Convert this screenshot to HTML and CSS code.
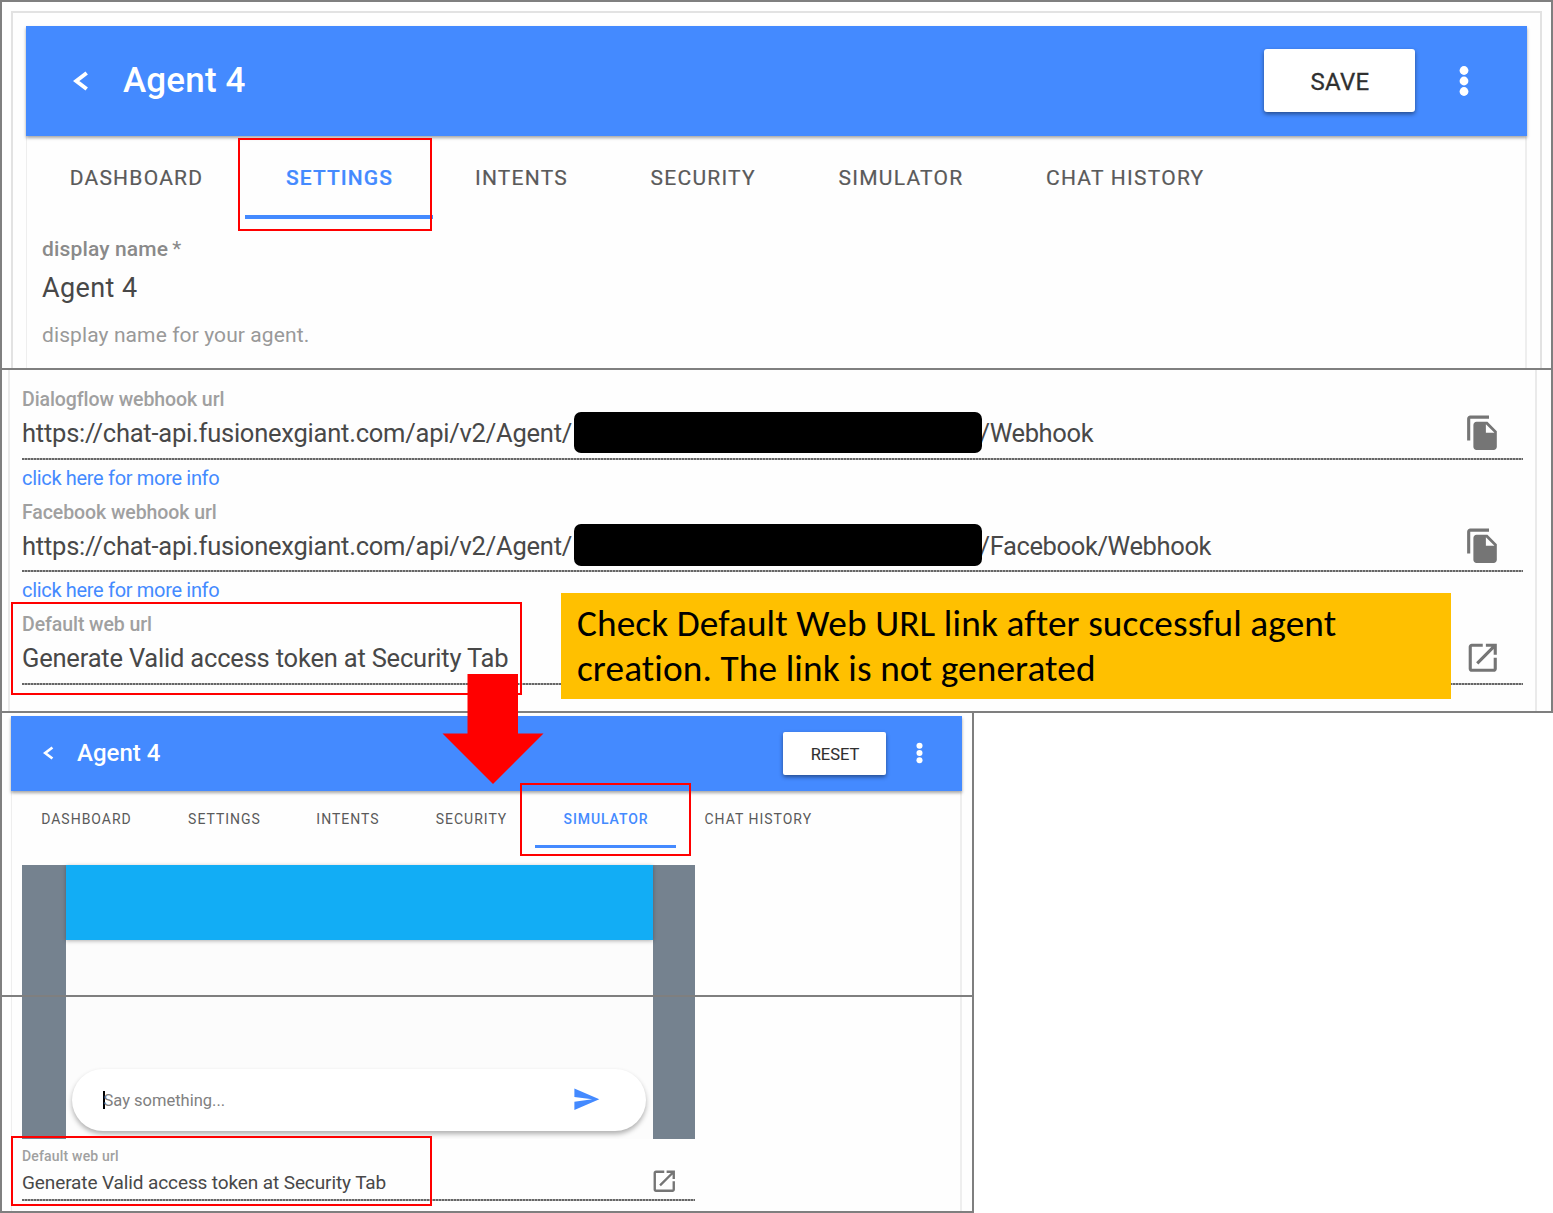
FILE: index.html
```html
<!DOCTYPE html>
<html lang="en">
<head>
<meta charset="utf-8">
<title>Agent 4</title>
<link rel="stylesheet" href="styles.css">
</head>
<body>
<svg class="defs" width="0" height="0" aria-hidden="true">
  <symbol id="back" viewBox="0 0 16 20"><path d="M13.700 2 3.200 10l10.500 8" fill="none" stroke="currentColor" stroke-width="4"/></symbol>
  <symbol id="more" viewBox="0 0 10 32"><circle cx="5" cy="5.500" r="4.400"/><circle cx="5" cy="16" r="4.400"/><circle cx="5" cy="26.500" r="4.400"/></symbol>
  <symbol id="copy" viewBox="0 0 24 24"><path d="M16 1H4c-1.100 0-2 .9-2 2v14h2V3h12V1zm-1 4l6 6v10c0 1.100-.9 2-2 2H7.990C6.890 23 6 22.100 6 21l.01-14c0-1.100.89-2 1.990-2h7zm-1 7h5.500L14 6.500V12z"/></symbol>
  <symbol id="open" viewBox="0 0 24 24"><path d="M19 19H5V5h7V3H5c-1.110 0-2 .9-2 2v14c0 1.100.89 2 2 2h14c1.100 0 2-.9 2-2v-7h-2v7zM14 3v2h3.590l-9.830 9.830 1.410 1.410L19 6.410V10h2V3h-7z"/></symbol>
  <symbol id="send" viewBox="0 0 24 24"><path d="M2.010 21L23 12 2.010 3 2 10l15 2-15 2z"/></symbol>
</svg>
<main class="board">
  <section class="pane pane-settings">
    <div class="card">
      <header class="toolbar">
        <svg class="back"><use href="#back"/></svg>
        <h1 class="title">Agent 4</h1>
        <button class="action">SAVE</button>
        <svg class="more"><use href="#more"/></svg>
      </header>
      <div class="card-body">
        <nav class="tabs">
          <a class="tab">DASHBOARD</a>
          <a class="tab active">SETTINGS</a>
          <a class="tab">INTENTS</a>
          <a class="tab">SECURITY</a>
          <a class="tab">SIMULATOR</a>
          <a class="tab">CHAT HISTORY</a>
        </nav>
        <div class="name-field">
          <label class="name-label">display name<span class="star">*</span></label>
          <div class="name-value">Agent 4</div>
          <div class="name-hint">display name for your agent.</div>
        </div>
      </div>
    </div>
  </section>

  <section class="pane pane-urls">
    <div class="url-list">
      <div class="field">
        <div class="label">Dialogflow webhook url</div>
        <div class="value"><span class="prefix">https://chat-api.fusionexgiant.com/api/v2/Agent/</span><span class="redacted"></span><span class="suffix">/Webhook</span><svg class="icon"><use href="#copy"/></svg></div>
        <a class="link">click here for more info</a>
      </div>
      <div class="field">
        <div class="label">Facebook webhook url</div>
        <div class="value"><span class="prefix">https://chat-api.fusionexgiant.com/api/v2/Agent/</span><span class="redacted"></span><span class="suffix">/Facebook/Webhook</span><svg class="icon"><use href="#copy"/></svg></div>
        <a class="link">click here for more info</a>
      </div>
      <div class="field">
        <div class="label">Default web url</div>
        <div class="value"><span class="message">Generate Valid access token at Security Tab</span><svg class="icon"><use href="#open"/></svg></div>
      </div>
    </div>
  </section>

  <section class="pane pane-simulator">
    <header class="toolbar">
      <svg class="back"><use href="#back"/></svg>
      <h1 class="title">Agent 4</h1>
      <button class="action">RESET</button>
      <svg class="more"><use href="#more"/></svg>
    </header>
    <div class="sim-body">
      <nav class="tabs">
        <a class="tab">DASHBOARD</a>
        <a class="tab">SETTINGS</a>
        <a class="tab">INTENTS</a>
        <a class="tab">SECURITY</a>
        <a class="tab active">SIMULATOR</a>
        <a class="tab">CHAT HISTORY</a>
      </nav>
      <div class="chat chat-top"><div class="screen"><div class="screen-bar"></div></div></div>
    </div>
  </section>

  <section class="pane pane-chat">
    <div class="sim-body">
      <div class="chat chat-bottom">
        <div class="screen">
          <div class="composer"><i class="caret"></i><span class="placeholder">Say something...</span><svg class="send"><use href="#send"/></svg></div>
        </div>
      </div>
      <div class="field small">
        <div class="label">Default web url</div>
        <div class="value"><span class="message">Generate Valid access token at Security Tab</span><svg class="icon"><use href="#open"/></svg></div>
      </div>
    </div>
  </section>

  <div class="mark mark-settings"></div>
  <div class="mark mark-url"></div>
  <div class="mark mark-simulator"></div>
  <div class="mark mark-result"></div>
  <p class="callout">Check Default Web URL link after successful agent<br>creation. The link is not generated</p>
  <svg class="arrow" viewBox="0 0 102 110"><path d="M25.500 0h50.500v59.500h25.500L51 110 .5 59.500h25z" fill="#f00"/></svg>
</main>
</body>
</html>
```
FILE: styles.css
```css
* { box-sizing: border-box; }
body { margin: 0; background: #fff; font-family: Roboto, sans-serif; color: #484848; }
.defs { position: absolute; }
svg { fill: currentColor; flex: none; display: block; }
.board { position: relative; width: 1553px; height: 1213px; overflow: hidden; white-space: nowrap; }

.pane { border: 2px solid #7f7f7f; overflow: hidden; background: #fefefe; }
.pane + .pane { margin-top: -2px; }
.pane-settings { height: 370px; padding: 9px 9px 0; }
.pane-urls { height: 345px; padding: 0 14px 0 6px; }
.pane-simulator { width: 974px; height: 286px; padding: 3px 10px 0 9px; }
.pane-chat { width: 974px; height: 218px; padding: 0 10px 0 9px; }

.card { height: 360px; border: 2px solid #e2e2e2; border-bottom: 0; padding: 13px 13px 0; }
.card-body { height: 234px; border: 1px solid #eee; border-width: 0 2px 0 1px; }

.toolbar { position: relative; display: flex; align-items: center; height: 110px; background: #448aff; color: #fff; box-shadow: 0 2px 3px rgba(0,0,0,.35); padding: 0 58px 1px 47px; }
.back { width: 16px; height: 20px; }
.title { margin: 0 auto 0 34px; font-weight: 500; font-size: 35px; line-height: 39px; letter-spacing: .15px; }
.action { width: 151px; height: 63px; border: 0; border-radius: 3px; background: #fff; color: #303030; font: 400 24px/28px Roboto, sans-serif; letter-spacing: .3px; padding: 2px 0 0 1px; box-shadow: 0 2px 4px rgba(0,0,0,.45); -webkit-text-stroke: .3px; }
.more { width: 10px; height: 32px; margin-left: 44px; }

.tabs { display: grid; grid-template-columns: 218px 188px 176px 187.500px 208px 240.500px; height: 83px; font-size: 21px; line-height: 24px; letter-spacing: 1.250px; color: #5a5a5a; }
.tab { display: flex; justify-content: center; padding: 30px 0 0 1px; border-bottom: 4px solid transparent; -webkit-text-stroke: .2px; }
.tab.active { color: #448aff; border-bottom-color: #448aff; font-weight: 500; letter-spacing: 1.050px; }

.name-field { padding: 14px 0 0 15px; }
.name-label { display: block; font-size: 21px; line-height: 32px; font-weight: 500; letter-spacing: .15px; color: #8a8a8a; }
.star { margin-left: 4px; font-weight: 400; }
.name-value { font-size: 27px; line-height: 46px; letter-spacing: .4px; }
.name-hint { font-size: 21px; line-height: 49px; letter-spacing: .1px; color: #999; }

.url-list { height: 341px; padding: 17px 12px 0; border: 2px solid #eaeaea; border-width: 0 2px; }
.field { height: 112.600px; }
.label { font-size: 19.500px; line-height: 26px; font-weight: 500; letter-spacing: -.08px; color: #a0a0a0; }
.value { display: flex; height: 46.500px; font-size: 25.500px; line-height: 41px; background: repeating-linear-gradient(90deg, #666 0 2px, #aaa 2px 3px) bottom / 100% 2px no-repeat; }
.prefix { width: 551.500px; letter-spacing: -.23px; }
.redacted { position: relative; width: 408px; height: 41px; margin-top: -1px; border-radius: 7px; background: #000; }
.field:nth-child(2) .redacted { height: 42px; margin-top: -2px; }
.suffix { margin-left: -2px; letter-spacing: -.37px; }
.message { letter-spacing: -.2px; }
.icon { width: 37.500px; height: 37.500px; margin: 1px 22px 0 auto; color: #757575; }
.link { display: block; font-size: 20px; line-height: 37px; letter-spacing: -.32px; color: #448aff; }

.pane-simulator .toolbar { height: 75px; padding: 0 39px 1px 32px; }
.pane-simulator .back { width: 11px; height: 14px; }
.pane-simulator .title { margin-left: 23px; font-size: 24px; line-height: 28px; padding: 0; letter-spacing: 0; }
.pane-simulator .action { width: 103px; height: 43px; margin-top: 1px; font-size: 16.500px; line-height: 20px; letter-spacing: 0; border-radius: 2px; -webkit-text-stroke: .1px; }
.pane-simulator .more { width: 7px; height: 22px; margin-left: 30px; }
.sim-body { border: solid #eee; border-width: 0 2px 0 1px; height: 214px; padding-left: 10px; }
.pane-simulator .tabs { grid-template-columns: 148px 128px 119px 128px 141px 163.500px; height: 57px; margin-left: -10px; font-size: 14px; line-height: 16px; letter-spacing: 1px; }
.pane-simulator .tab { padding-top: 20px; border-bottom-width: 3px; -webkit-text-stroke: 0; }
.pane-simulator .tab.active { letter-spacing: .9px; }

.chat { width: 673px; background: #75828f; padding: 0 42.500px 0 44px; }
.chat-top { height: 140px; margin-top: 17px; }
.chat-bottom { height: 142px; }
.screen { height: 100%; background: #fcfcfc; }
.chat-bottom .screen { padding: 72px 7px 0 6px; }
.screen-bar { height: 74.500px; background: #12adf5; box-shadow: 0 1px 4px rgba(0,0,0,.3); }
.composer { display: flex; align-items: center; height: 62px; border-radius: 31px; background: #fff; box-shadow: 0 3px 5px rgba(0,0,0,.3); padding: 0 45.500px 0 31px; }
.caret { width: 1.500px; height: 18px; background: #000; }
.placeholder { font-size: 16.500px; color: #808080; margin: 0 auto 0 -1px; }
.send { width: 28.500px; height: 28.500px; margin-top: -2px; color: #448aff; }

.small { width: 673px; height: 62px; padding-top: 8px; }
.small .label { font-size: 14px; line-height: 19px; letter-spacing: .18px; }
.small .value { font-size: 19px; line-height: 33px; height: 35px; }
.small .message { letter-spacing: -.11px; }
.small .icon { width: 28.500px; height: 28.500px; margin: 1px 17px 0 auto; }

.mark { position: absolute; border: 2px solid #f00; }
.mark-settings { left: 238px; top: 138px; width: 194px; height: 93px; }
.mark-url { left: 11px; top: 602px; width: 511px; height: 93px; }
.mark-simulator { left: 520px; top: 783px; width: 171px; height: 73px; }
.mark-result { left: 11px; top: 1136px; width: 421px; height: 70px; }
.callout { position: absolute; left: 561px; top: 593px; width: 890px; height: 106px; margin: 0; padding: 8px 16px; background: #ffc000; color: #000; font: 37.300px/45px Carlito, Lato, sans-serif; letter-spacing: .1px; font-variant-ligatures: none; }
.arrow { position: absolute; left: 441.500px; top: 674px; width: 102px; height: 110px; }
```
